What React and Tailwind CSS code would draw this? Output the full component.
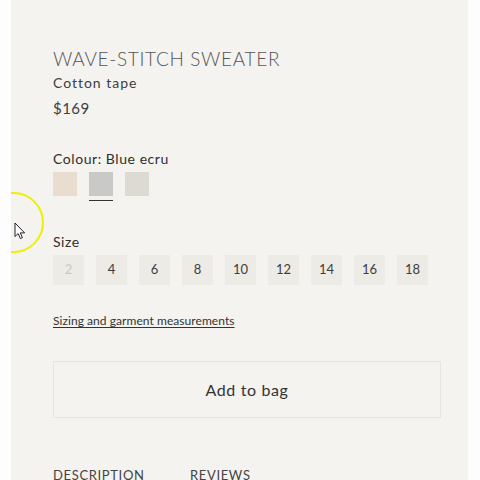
const SWATCHES = [
  { name: "Rose sand", color: "#e9ddd0" },
  { name: "Blue ecru", color: "#c9cac8", active: true },
  { name: "Stone", color: "#dcdad3" },
];

const SIZES = ["2", "4", "6", "8", "10", "12", "14", "16", "18"];

function Cursor() {
  return (
    <svg width="12" height="18" viewBox="0 0 12 18" className="absolute left-[3px] top-[222px]">
      <path d="M1 1 L1 14.5 L4.2 11.6 L6.4 16.6 L8.4 15.7 L6.3 10.9 L10.6 10.9 Z"
            fill="#fff" stroke="#222" strokeWidth="1" strokeLinejoin="round" />
    </svg>
  );
}

export default function App() {
  return (
    <div className="w-[480px] h-[480px] flex bg-white overflow-hidden"
         style={{ fontFamily: "Lato, 'Open Sans', sans-serif" }}>
      <div className="w-[11px] bg-[#fdfdfd]" />
      <div className="relative flex-1 bg-[#f4f3ef] overflow-hidden pl-[42px] pt-[47px]">
        {/* click highlight */}
        <div className="absolute left-[-28px] top-[192px] w-[61px] h-[61px] rounded-full border-[2.5px] border-[#eef000]" />
        <Cursor />

        <h1 className="text-[19px] leading-[24px] font-light tracking-[0.035em] text-[#555555] uppercase">
          Wave-Stitch Sweater
        </h1>
        <div className="mt-[2px] text-[14px] leading-[20px] tracking-[0.07em] text-[#3d3d3d]">Cotton tape</div>
        <div className="mt-[5px] text-[15px] leading-[20px] tracking-[0.03em] text-[#3d3d3d]">$169</div>

        <div className="mt-[31px] text-[14px] leading-[20px] tracking-[0.04em] text-[#2e2e2e]">Colour: Blue ecru</div>
        <div className="mt-[3px] flex gap-3">
          {SWATCHES.map(s => (
            <div key={s.name} className="flex flex-col">
              <div className="w-6 h-6" style={{ background: s.color }} />
              <div className={"mt-1 h-px w-6 " + (s.active ? "bg-[#333333]" : "bg-transparent")} />
            </div>
          ))}
        </div>

        <div className="mt-[31px] text-[14px] leading-[20px] tracking-[0.04em] text-[#2e2e2e]">Size</div>
        <div className="mt-[3px] flex gap-[12px]">
          {SIZES.map((s, i) => (
            <div key={s}
                 className={"w-[31px] h-[30px] flex items-center justify-center bg-[#ecebe6] text-[13px] " + (i === 0 ? "text-[#c9c9c4]" : "text-[#3d3d3d]")}>
              {s}
            </div>
          ))}
        </div>

        <div className="mt-[28px] text-[12px] leading-[16px] tracking-[0.005em] text-[#333333] underline underline-offset-2">
          Sizing and garment measurements
        </div>

        <button className="mt-[32px] w-[388px] h-[57px] border border-[#e6e5e0] flex items-center justify-center text-[16px] tracking-[0.04em] text-[#333333]">
          Add to bag
        </button>

        <div className="mt-[48px] flex text-[13px] leading-[18px] tracking-[0.05em] text-[#444444] uppercase">
          <span className="w-[137px]">Description</span>
          <span>Reviews</span>
        </div>
      </div>
      <div className="w-[12px] bg-[#fdfdfd]" />
    </div>
  );
}
